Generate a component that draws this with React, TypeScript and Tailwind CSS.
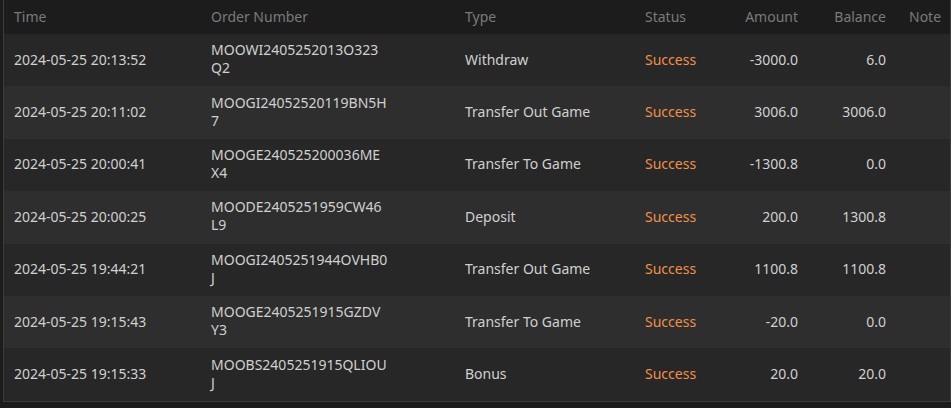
const rows = [
  { time: "2024-05-25 20:13:52", order: ["MOOWI2405252013O323", "Q2"], type: "Withdraw", amount: "-3000.0", balance: "6.0" },
  { time: "2024-05-25 20:11:02", order: ["MOOGI24052520119BN5H", "7"], type: "Transfer Out Game", amount: "3006.0", balance: "3006.0" },
  { time: "2024-05-25 20:00:41", order: ["MOOGE240525200036ME", "X4"], type: "Transfer To Game", amount: "-1300.8", balance: "0.0" },
  { time: "2024-05-25 20:00:25", order: ["MOODE2405251959CW46", "L9"], type: "Deposit", amount: "200.0", balance: "1300.8" },
  { time: "2024-05-25 19:44:21", order: ["MOOGI2405251944OVHB0", "J"], type: "Transfer Out Game", amount: "1100.8", balance: "1100.8" },
  { time: "2024-05-25 19:15:43", order: ["MOOGE2405251915GZDV", "Y3"], type: "Transfer To Game", amount: "-20.0", balance: "0.0" },
  { time: "2024-05-25 19:15:33", order: ["MOOBS2405251915QLIOU", "J"], type: "Bonus", amount: "20.0", balance: "20.0" },
];

const cols = "grid grid-cols-[197px_254px_180px_90px_83px_91px_1fr]";

const App = () => {
  return (
    <div className="w-[951px] h-[408px] bg-[#1c1c1c] font-['Noto_Sans',sans-serif] text-[14px] overflow-hidden">
      <div className="w-[948px] ml-[3px] border-l border-b border-r border-[#3c3c3c] bg-[#262626]">
        {/* header */}
        <div className={`${cols} h-[34px] pb-[2px] items-center bg-[#1c1c1c] text-[#7a7a7a]`}>
          <div className="pl-[10px]">Time</div>
          <div className="pl-[10px]">Order Number</div>
          <div className="pl-[10px]">Type</div>
          <div className="pl-[10px]">Status</div>
          <div className="pr-[10px] text-right">Amount</div>
          <div className="pr-[13px] text-right">Balance</div>
          <div className="pl-[10px]">Note</div>
        </div>

        {rows.map((r, i) => (
          <div
            key={r.time}
            className={`${cols} h-[52.4px] pb-[2px] items-center text-[#d0d0d0] ${i % 2 === 0 ? "bg-[#272727]" : "bg-[#2e2e2e]"}`}
          >
            <div className="pl-[10px]">{r.time}</div>
            <div className="pl-[10px] leading-[18px]">
              {r.order[0]}
              <br />
              {r.order[1]}
            </div>
            <div className="pl-[10px]">{r.type}</div>
            <div className="pl-[10px] text-[#f0904a]">Success</div>
            <div className="pr-[10px] text-right">{r.amount}</div>
            <div className="pr-[13px] text-right">{r.balance}</div>
            <div className="pl-[10px]"></div>
          </div>
        ))}
      </div>
    </div>
  );
};

export default App;
